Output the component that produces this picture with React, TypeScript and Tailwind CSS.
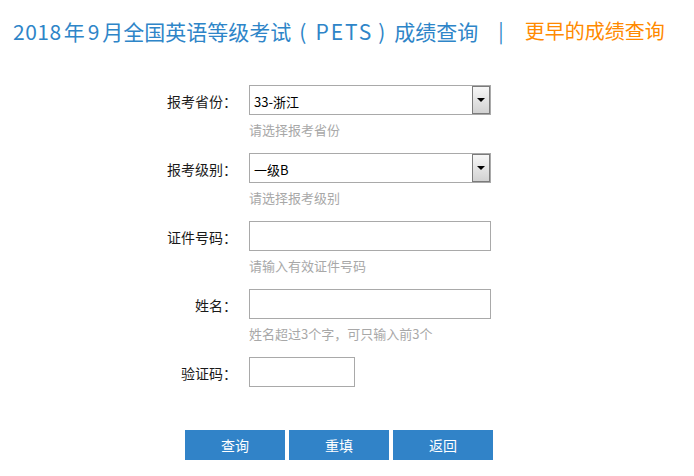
import React from "react";

const FONT = {
  fontFamily: '"Microsoft YaHei", "Noto Sans CJK SC", "Noto Sans", sans-serif',
};

function SelectBox({ value }: { value: string }) {
  return (
    <div className="relative flex h-[30px] w-[242px] items-end border border-[#a9a9a9] bg-white pb-[4px] pl-[4px] text-[13px] leading-[16px] text-black">
      <span>{value}</span>
      <div className="absolute right-0 top-0 flex h-full w-[18px] items-center justify-center border border-[#7b7b7b] bg-gradient-to-b from-[#f7f7f7] to-[#d2d2d2]">
        <span className="h-0 w-0 border-x-[4px] border-t-[4px] border-x-transparent border-t-black" />
      </div>
    </div>
  );
}

function TextBox({ small }: { small?: boolean }) {
  return (
    <div
      className={`h-[30px] border border-[#a9a9a9] bg-white ${
        small ? "w-[106px]" : "w-[242px]"
      }`}
    />
  );
}

function Row({
  label,
  hint,
  children,
}: {
  label: string;
  hint?: string;
  children: React.ReactNode;
}) {
  return (
    <div className="flex h-[68px] items-start gap-[12px]">
      <div className="flex h-[30px] w-[100px] items-center justify-end pt-[3px] text-[14px] text-[#1a1a1a]">
        {label}
      </div>
      <div className="flex flex-col">
        {children}
        {hint && (
          <p className="mt-[6px] text-[13px] leading-[18px] text-[#a8a8a8]">{hint}</p>
        )}
      </div>
    </div>
  );
}

export default function App() {
  return (
    <div className="h-[476px] w-[694px] bg-white" style={FONT}>
      {/* Header */}
      <div className="flex items-center pl-[13px] pt-[20px] text-[20px] leading-[22px]">
        <h1 className="flex text-[21px] text-[#2e85c8]">
          <span className="tracking-[0.5px]">2018</span>
          <span className="ml-[2px]">年</span>
          <span className="mx-[3px]">9</span>
          <span>月全国英语等级考试</span>
          <span className="ml-[8px]">(</span>
          <span className="ml-[9px] tracking-[2px]">PETS</span>
          <span className="ml-[5px]">)</span>
          <span className="ml-[9px]">成绩查询</span>
        </h1>
        <span className="ml-[20px] text-[#2e85c8]">|</span>
        <span className="ml-[21px] text-[#ff8a00]">更早的成绩查询</span>
      </div>

      {/* Form */}
      <div className="mt-[43px] pl-[137px]">
        <Row label="报考省份：" hint="请选择报考省份">
          <SelectBox value="33-浙江" />
        </Row>
        <Row label="报考级别：" hint="请选择报考级别">
          <SelectBox value="一级B" />
        </Row>
        <Row label="证件号码：" hint="请输入有效证件号码">
          <TextBox />
        </Row>
        <Row label="姓名：" hint="姓名超过3个字，可只输入前3个">
          <TextBox />
        </Row>
        <div className="flex items-start gap-[12px]">
          <div className="flex h-[30px] w-[100px] items-center justify-end pt-[3px] text-[14px] text-[#1a1a1a]">
            验证码：
          </div>
          <TextBox small />
        </div>
      </div>

      {/* Buttons */}
      <div className="ml-[185px] mt-[43px] flex gap-[4px]">
        {["查询", "重填", "返回"].map((t) => (
          <button
            key={t}
            className="h-[30px] w-[100px] bg-[#3183c8] text-[14px] text-white"
          >
            {t}
          </button>
        ))}
      </div>
    </div>
  );
}
